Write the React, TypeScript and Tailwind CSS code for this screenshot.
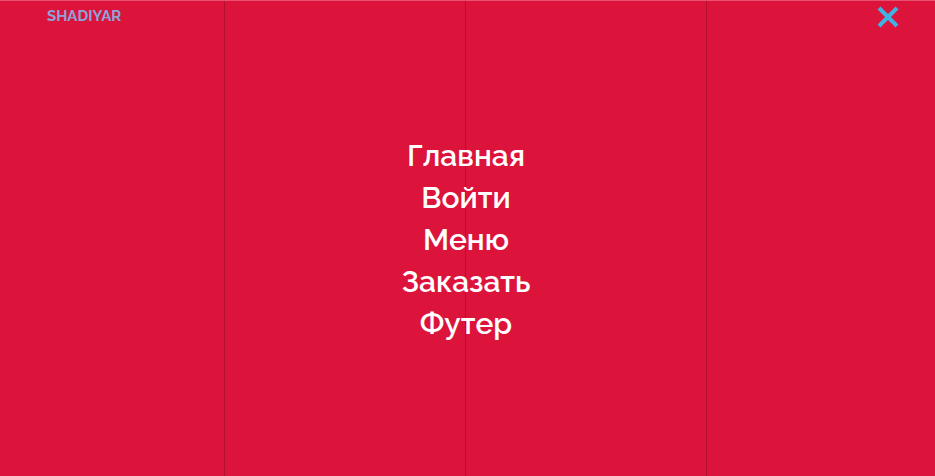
const links = ['Главная', 'Войти', 'Меню', 'Заказать', 'Футер'];

export default function App() {
  return (
    <div
      className="relative h-[476px] w-[935px] overflow-hidden bg-[#dc143c]"
      style={{ fontFamily: 'Raleway, "Noto Sans", Lato, sans-serif' }}
    >
      {/* background panels */}
      <div className="absolute inset-0 grid grid-cols-[225px_241px_241px_1fr] border-t border-[#e8506f]">
        <div className="border-r border-[#b3102f]" />
        <div className="border-r border-[#b3102f]" />
        <div className="border-r border-[#b3102f]" />
        <div />
      </div>

      <div className="relative flex h-full flex-col">
        <header className="flex items-start justify-between pl-[47px] pr-[36px] pt-[8px]">
          <span className="text-[15px] font-bold leading-[17px] text-[#8ca3d9]">SHADIYAR</span>
          <svg width="22" height="22" viewBox="0 0 22 22" className="-mt-[2px]">
            <path d="M2 2 L20 20 M20 2 L2 20" stroke="#3db3e3" strokeWidth="4" strokeLinecap="butt" />
          </svg>
        </header>

        <nav className="-mt-[24px] flex flex-1 flex-col items-center justify-center pr-[3px]">
          {links.map((l) => (
            <a key={l} href="#" className="text-[30px] font-semibold leading-[42px] text-white">
              {l}
            </a>
          ))}
        </nav>
      </div>
    </div>
  );
}
